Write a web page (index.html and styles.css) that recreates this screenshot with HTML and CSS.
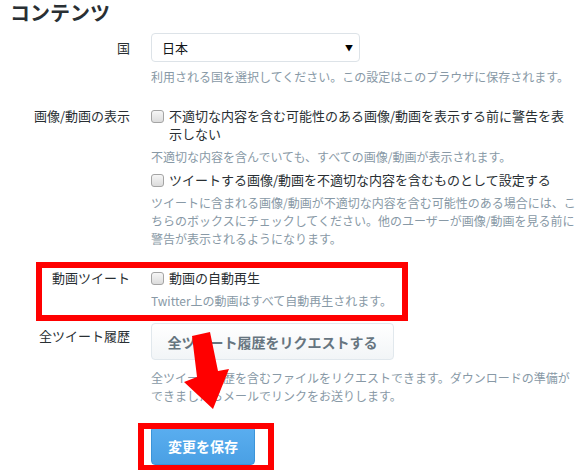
FILE: index.html
```html
<!DOCTYPE html>
<html lang="ja">
<head>
  <meta charset="UTF-8" />
  <title>コンテンツ</title>
  <link rel="stylesheet" href="styles.css">
</head>
<body>
  <div class="page">
    <h2>コンテンツ</h2>

    <div class="row row-country">
      <div class="label">国</div>
      <div class="field">
        <div class="select">
          <span>日本</span>
          <span class="caret">▼</span>
        </div>
        <p class="help">利用される国を選択してください。この設定はこのブラウザに保存されます。</p>
      </div>
    </div>

    <div class="row row-media">
      <div class="label">画像/動画の表示</div>
      <div class="field">
        <label class="check">
          <input type="checkbox" />
          <span class="check-text">不適切な内容を含む可能性のある画像/動画を表示する前に警告を表示しない</span>
        </label>
        <p class="help">不適切な内容を含んでいても、すべての画像/動画が表示されます。</p>
        <label class="check">
          <input type="checkbox" />
          <span class="check-text">ツイートする画像/動画を不適切な内容を含むものとして設定する</span>
        </label>
        <p class="help">ツイートに含まれる画像/動画が不適切な内容を含む可能性のある場合には、こちらのボックスにチェックしてください。他のユーザーが画像/動画を見る前に警告が表示されるようになります。</p>
      </div>
    </div>

    <div class="row row-video">
      <div class="label">動画ツイート</div>
      <div class="field">
        <label class="check">
          <input type="checkbox" />
          <span class="check-text">動画の自動再生</span>
        </label>
        <p class="help">Twitter上の動画はすべて自動再生されます。</p>
      </div>
    </div>

    <div class="row row-archive">
      <div class="label label-btn">全ツイート履歴</div>
      <div class="field">
        <button class="btn">全ツイート履歴をリクエストする</button>
        <p class="help help-archive">全ツイート履歴を含むファイルをリクエストできます。ダウンロードの準備ができましたらメールでリンクをお送りします。</p>
      </div>
    </div>

    <div class="row row-save">
      <div class="label"></div>
      <div class="field">
        <button class="btn btn-primary">変更を保存</button>
      </div>
    </div>

    <!-- 注釈（赤枠と矢印） -->
    <div class="mark mark-video"></div>
    <div class="mark mark-save"></div>
    <svg class="arrow" width="580" height="470" viewBox="0 0 580 470">
      <polygon points="192,336 210,332 218,371 229,369 213,409 184,382 197,377" fill="#ff0000" />
    </svg>
  </div>
</body>
</html>
```

FILE: styles.css
```css
body {
  margin: 0;
  font-family: "Noto Sans CJK JP", "Liberation Sans", sans-serif;
  color: #292f33;
  background-color: #fff;
  overflow: hidden;
}
.page {
  position: relative;
  width: 580px;
  height: 470px;
}
h2 {
  margin: 0 0 0 10px;
  font-size: 20px;
  line-height: 26px;
  font-weight: bold;
  color: #292f33;
}
.row {
  display: grid;
  grid-template-columns: 130px 426px;
  column-gap: 21px;
}
.label {
  text-align: right;
  font-size: 13px;
  line-height: 18px;
}
.help {
  margin: 5px 0 0;
  font-size: 12px;
  line-height: 18px;
  color: #8899a6;
}
.row-country {
  margin-top: 7px;
}
.row-country .label {
  padding-top: 6px;
}
.row-country .help {
  margin-top: 6px;
}
.select {
  width: 197px;
  height: 27px;
  padding: 0 0 0 10px;
  border: 1px solid #dde3e8;
  border-radius: 4px;
  display: flex;
  align-items: center;
  justify-content: space-between;
  font-size: 13px;
  color: #14171a;
}
.caret {
  font-size: 8px;
  margin-right: 6px;
  color: #000;
}
.row-media, .row-video {
  margin-top: 21px;
}
.check {
  display: flex;
  align-items: flex-start;
  gap: 5px;
  font-size: 13px;
  line-height: 18px;
}
.help + .check {
  margin-top: 5px;
}
.check input {
  appearance: none;
  margin: 3px 0 0;
  width: 13px;
  height: 13px;
  flex: none;
  border: 1px solid #a4a4a4;
  border-radius: 3px;
  background: linear-gradient(#f6f6f6, #dcdcdc);
}
.check-text {
  width: 400px;
}
.row-archive {
  margin-top: 13px;
}
.label-btn {
  padding-top: 4px;
}
.btn {
  font-family: inherit;
  font-size: 14px;
  font-weight: bold;
  width: 243px;
  height: 37px;
  padding: 0;
  color: #66757f;
  border: 1px solid #e1e8ed;
  border-radius: 4px;
  background: linear-gradient(#fff, #f2f5f7);
  cursor: pointer;
}
.help-archive {
  margin-top: 9px;
}
.row-save {
  margin-top: 21px;
}
.btn-primary {
  width: 104px;
  height: 39px;
  color: #fff;
  border-color: #3b94d9;
  background: linear-gradient(#5aaef0, #4aa0e4);
}
.mark {
  position: absolute;
  border: 6px solid #ff0000;
  box-sizing: border-box;
}
.mark-video {
  left: 36px;
  top: 262px;
  width: 372px;
  height: 59px;
}
.mark-save {
  left: 138px;
  top: 423px;
  width: 136px;
  height: 48px;
}
.arrow {
  position: absolute;
  left: 0;
  top: 0;
  pointer-events: none;
}
```
